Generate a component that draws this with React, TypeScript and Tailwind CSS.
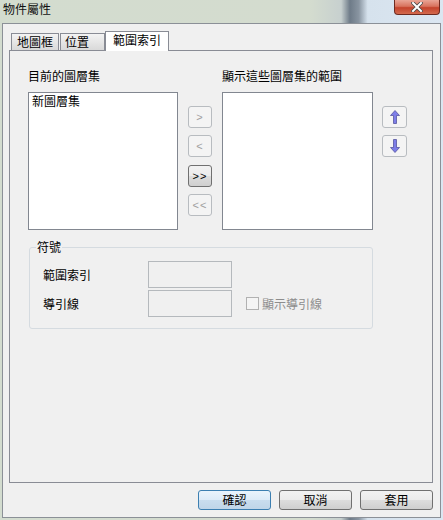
const SmallBtn = ({ label, enabled }: { label: string; enabled?: boolean }) => (
  <div
    className={
      enabled
        ? "h-[22px] w-[24px] flex items-center justify-center rounded-[3px] border border-[#707070] bg-[linear-gradient(#f2f2f2_0%,#ebebeb_50%,#dddddd_51%,#cfcfcf_100%)] text-[11px] text-black font-['Liberation_Sans',sans-serif] tracking-[1px]"
        : "h-[22px] w-[24px] flex items-center justify-center rounded-[3px] border border-[#b8bcc0] bg-[#f4f4f4] text-[11px] text-[#a0a0a0] font-['Liberation_Sans',sans-serif] tracking-[1px]"
    }
  >
    {label}
  </div>
);

const ArrowBtn = ({ down }: { down?: boolean }) => (
  <div className="h-[22px] w-[25px] flex items-center justify-center rounded-[3px] border border-[#b8bcc0] bg-[#f4f4f4]">
    <svg width="10" height="14" viewBox="0 0 10 14" className={down ? "rotate-180" : ""}>
      <polygon points="5,0.5 9.5,5.5 6.5,5.5 6.5,13.5 3.5,13.5 3.5,5.5 0.5,5.5" fill="#7d7de8" stroke="#55559f" strokeWidth="0.8" />
    </svg>
  </div>
);

const DlgBtn = ({ label, primary }: { label: string; primary?: boolean }) => (
  <div
    className={
      primary
        ? "w-[73px] h-[20px] flex items-center justify-center rounded-[3px] border border-[#3c7fb1] bg-[linear-gradient(#eaf4fc_0%,#dcebf8_50%,#c9ddee_51%,#bfd5e8_100%)] text-[12px] leading-[14px]"
        : "w-[73px] h-[20px] flex items-center justify-center rounded-[3px] border border-[#707070] bg-[linear-gradient(#f2f2f2_0%,#ebebeb_50%,#dddddd_51%,#cfcfcf_100%)] text-[12px] leading-[14px]"
    }
  >
    {label}
  </div>
);

export default function App() {
  return (
    <div className="w-[443px] h-[520px] overflow-hidden text-black font-['Noto_Sans_CJK_TC','Liberation_Sans',sans-serif] bg-[linear-gradient(90deg,#d3dccf_0%,#d4dccf_70%,#c7d0cf_77%,#6e7b88_79%,#8995a1_81%,#d6e2ed_83%,#dbe6f1_100%)]">
      {/* title bar */}
      <div className="h-[23px] flex items-start">
        <div className="pl-[3px] pt-[1px] text-[12px] leading-[16px] text-[#111]">物件屬性</div>
        <div className="ml-auto mr-[3px] w-[46px] h-[15px] flex items-center justify-center rounded-b-[4px] border border-t-0 border-[#6e2a20] bg-[linear-gradient(#e9a596_0%,#d8735e_45%,#c4432c_55%,#d36a4e_100%)]">
          <svg width="12" height="10" viewBox="0 0 12 10">
            <path d="M2 1 L10 9 M10 1 L2 9" stroke="#4a4a4a" strokeWidth="3.6" strokeLinecap="square" />
            <path d="M2 1 L10 9 M10 1 L2 9" stroke="#ffffff" strokeWidth="2" strokeLinecap="square" />
          </svg>
        </div>
      </div>

      {/* client area */}
      <div className="ml-[2px] w-[439px] h-[495px] border border-[#8b9097] bg-[#f0f0f0] pl-[6px] pt-[7px]">
        {/* tabs */}
        <div className="h-[19px] flex items-end pl-[2px]">
          <div className="w-[48px] h-[17px] border border-b-0 border-[#898c95] bg-[linear-gradient(#f3f3f3,#d9d9d9)] pl-[5px] text-[12px] leading-[16px]">地圖框</div>
          <div className="ml-[1px] w-[45px] h-[17px] border border-b-0 border-[#898c95] bg-[linear-gradient(#f3f3f3,#d9d9d9)] pl-[4px] text-[12px] leading-[16px]">位置</div>
          <div className="relative z-10 -mb-[1px] w-[64px] h-[20px] border border-b-0 border-[#898c95] bg-white pl-[7px] text-[12px] leading-[16px]">範圍索引</div>
        </div>

        {/* tab panel */}
        <div className="w-[424px] h-[433px] border border-[#898c95] bg-[#f0f0f0] pl-[18px] pt-[17px]">
          <div className="flex items-start text-[12px]">
            <div className="w-[150px]">
              <div className="h-[15px] leading-[15px]">目前的圖層集</div>
              <div className="mt-[9px] h-[138px] border border-[#828790] bg-white pl-[3px] leading-[15px]">新圖層集</div>
            </div>
            <div className="ml-[10px] mt-[38px] flex flex-col gap-[7px]">
              <SmallBtn label=">" />
              <SmallBtn label="<" />
              <div className="mt-[1px]">
                <SmallBtn label=">>" enabled />
              </div>
              <SmallBtn label="<<" />
            </div>
            <div className="ml-[10px] w-[151px]">
              <div className="h-[15px] leading-[15px]">顯示這些圖層集的範圍</div>
              <div className="mt-[9px] h-[138px] border border-[#828790] bg-white" />
            </div>
            <div className="ml-[9px] mt-[38px] flex flex-col gap-[7px]">
              <ArrowBtn />
              <ArrowBtn down />
            </div>
          </div>

          {/* 符號 group */}
          <fieldset className="mt-[10px] ml-[1px] w-[344px] rounded-[3px] border border-[#d5dbe0] pb-[11px] text-[12px]">
            <legend className="ml-[6px] px-[1px] leading-[14px]">符號</legend>
            <div className="pt-[7px] flex items-center">
              <div className="w-[118px] pl-[13px] leading-[15px]">範圍索引</div>
              <div className="w-[84px] h-[27px] border border-[#b5b9bd] bg-[#f0f0f0]" />
            </div>
            <div className="mt-[2px] flex items-center">
              <div className="w-[118px] pl-[13px] leading-[15px]">導引線</div>
              <div className="w-[84px] h-[27px] border border-[#b5b9bd] bg-[#f0f0f0]" />
              <div className="ml-[14px] w-[13px] h-[13px] border border-[#b1b1b1] bg-[#f4f4f4]" />
              <div className="ml-[3px] leading-[15px] text-[#8d8d8d]">顯示導引線</div>
            </div>
          </fieldset>
        </div>

        {/* dialog buttons */}
        <div className="mt-[7px] pr-[7px] flex justify-end gap-[8px]">
          <DlgBtn label="確認" primary />
          <DlgBtn label="取消" />
          <DlgBtn label="套用" />
        </div>
      </div>
    </div>
  );
}
